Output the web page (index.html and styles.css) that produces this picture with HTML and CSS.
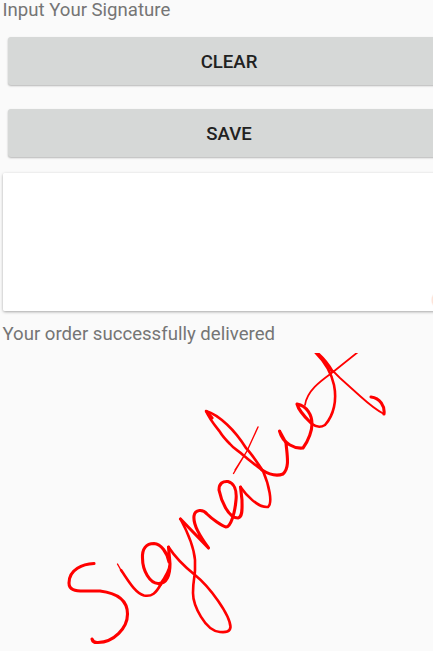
FILE: index.html
```
<!DOCTYPE html>
<html lang="en">
<head>
<meta charset="utf-8">
<title>Signature</title>
<link rel="stylesheet" href="styles.css">
</head>
<body>
<main class="screen">
  <p class="label">Input Your Signature</p>
  <button class="button">CLEAR</button>
  <button class="button">SAVE</button>
  <div class="pad"></div>
  <p class="label status">Your order successfully delivered</p>
  <svg class="signature" viewBox="0 353 433 298" role="img" aria-label="Signature">
    <path d="M94 563.5C83 564 69 569 69 583C69 590 75 591 84 591H100C116 593 127.500 599 127.500 614C127.500 628 114 642 98 642.500Q93 643 92 639"/>
    <path class="thin" d="M117.500 564L122 572"/>
    <path class="medium" d="M121 570C128 580 135 593 144 595.500C152 597 156 593 161 584"/>
    <path d="M160 585C165 578 170 570 170 564L168.500 547M170 564C170 575 167 584 158 583.500C150 583 142.500 571 142.500 558C142 549 146 543.500 154 543.500C161 544 167 552 169 562"/>
    <path class="medium" d="M168.500 547C175 557 185 567 195 575C210 587 230 615 230.500 627C230 632 226 632.500 220 632C205 631 193 605 193 593C193 580 195 576 195 570V560C194 548 188 533 180.500 519"/>
    <path d="M180.500 519L208.500 548C200 536 193 525 194 516C195 509 203 509 207 514C212 519 222 526 226 527C231 527 235 512 236 500C237 490 234 483 228 481.500C223 481 219 483 219 490C221 500 228 518 238 518C243 517 242 508 242 500L240.500 487"/>
    <path class="medium" d="M240.500 487C246 495 258 508 268 507C273 503 269 485 263 471C257 462 250 452 246 448C241 440 234 431 227 424.500C220 418 213 413 206 411C210 420 217 428 220 432C223 437 227 441 230 444C234 449 239 451 243 455C250 461 257 466 263 471"/>
    <path d="M207 412L212 418M262 470C270 475 278 476 283 474C290 468 287 455 286 443L279.500 431C283 444 295 449 303 448C309 440 312 430 312 424C312 415 307 406 297 404C299 412 308 420 312 424"/>
    <path class="medium" d="M312 424C316 427 320 428 325 425C334 415 337 400 334 385C331 371 325 362 315 352"/>
    <path class="thin" d="M258 427L247 451L233.500 473.500M247 451L235 470"/>
    <path class="slim" d="M305 405C307 390 322 380 333 372L358 352M333 371L340 378L360 396C370 405 378 411 384 414"/>
    <path d="M316 352C322 357 328 364 332 371M384 414C385 406 380 398 371 397"/>
  </svg>
</main>
</body>
</html>
```
FILE: styles.css
```
* { box-sizing: border-box; }

body {
  margin: 0;
  background: #fafafa;
  font-family: Roboto, "Liberation Sans", sans-serif;
  overflow: hidden;
}

.screen {
  display: flex;
  flex-direction: column;
  height: 651px;
  overflow: hidden;
}

.label {
  margin: 0 0 17px 2.5px;
  height: 20px;
  font-size: 18.6px;
  line-height: 20px;
  color: #757575;
  white-space: nowrap;
}

.button {
  flex: none;
  width: 442px;
  height: 48px;
  margin: 0 0 24px 8px;
  padding: 2px 0 0;
  border: 0;
  border-radius: 3px;
  background: #d6d8d7;
  box-shadow: 0 1px 2px rgba(0, 0, 0, .28);
  color: #212121;
  font: 500 18.6px/1 Roboto, "Liberation Sans", sans-serif;
}

.pad {
  flex: none;
  width: 450px;
  height: 138px;
  margin: -8px 0 0 3px;
  border-radius: 2px;
  background: radial-gradient(ellipse 2px 6px at 430px 127px, #fde3d8 50%, #fff 100%);
  box-shadow: 0 1px 3px rgba(0, 0, 0, .34);
}

.status { margin: 13px 0 9px 2.5px; }

.signature {
  flex: none;
  display: block;
  width: 433px;
  height: 298px;
  fill: none;
  stroke: #f00;
  stroke-width: 3.1;
  stroke-linecap: round;
  stroke-linejoin: round;
}

.medium { stroke-width: 2.6; }
.slim { stroke-width: 1.8; }
.thin { stroke-width: 1.4; }
```
